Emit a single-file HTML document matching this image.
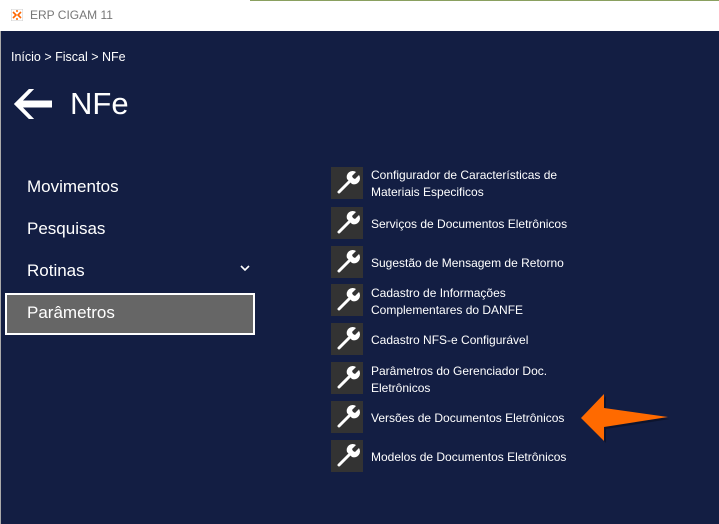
<!DOCTYPE html>
<html><head><style>
body{margin:0;width:719px;height:524px;overflow:hidden;background:#131e43;font-family:"Liberation Sans",sans-serif;position:relative}
.tb{position:absolute;left:0;top:0;width:719px;height:31px;background:#fff}
.tb span{position:absolute;left:30px;top:8px;font-size:12px;color:#777}
.lb{position:absolute;left:0;top:31px;width:1px;height:493px;background:#aaa}
.bc{position:absolute;left:11px;top:50px;color:#fff;font-size:12.5px}
.h{position:absolute;left:70px;top:86px;color:#fff;font-size:31px}
.m{position:absolute;left:27px;color:#fff;font-size:17px}
.sel{position:absolute;left:5px;top:293px;width:246px;height:38px;border:2px solid #fff;background:#666}
.it{position:absolute;left:331px;height:32px;width:330px}
.ic{position:absolute;left:0;top:0;width:32px;height:32px;background:#333}
.tx{position:absolute;left:40px;color:#fff;font-size:12px;line-height:17px}
</style></head><body>
<div class="tb"><svg style="position:absolute;left:11px;top:9px" width="12" height="12"><rect width="12" height="12" fill="#fff" stroke="#ccc"/><path d="M2 3l3 3-3 3M10 3l-3 3 3 3M5 2h2M5 10h2" stroke="#f60" stroke-width="1.6" fill="none"/></svg><span>ERP CIGAM 11</span></div>
<div style="position:absolute;left:250px;top:0;width:469px;height:1px;background:#8aa060"></div>
<div class="lb"></div>
<div class="bc">Início &gt; Fiscal &gt; NFe</div>
<svg style="position:absolute;left:12px;top:87px" width="40" height="34"><path d="M2 17L17 2l5 0-11 11.5h39v7H11L22 32h-5z" fill="#fff"/><path d="M2 17L17 2h5L10 14h40v6H10l12 12h-5z" fill="#fff"/></svg>
<div class="h">NFe</div>
<div class="m" style="top:177px">Movimentos</div>
<div class="m" style="top:219px">Pesquisas</div>
<div class="m" style="top:261px">Rotinas</div>
<svg style="position:absolute;left:240px;top:265px" width="10" height="8"><path d="M1 1l4 4 4-4" stroke="#fff" stroke-width="1.6" fill="none"/></svg>
<div class="sel"></div>
<div class="m" style="top:303px">Parâmetros</div>

<svg width="0" height="0" style="position:absolute"><defs><g id="w"><path d="M8 25L18 15" stroke="#fff" stroke-width="3" stroke-linecap="round"/><path d="M16 12a6 6 0 0 1 9-7l-4 4 1 2 2 1 4-4a6 6 0 0 1-7 9z" fill="#fff"/></g></defs></svg>

<div class="it" style="top:167px"><div class="ic"><svg width="32" height="32"><use href="#w"/></svg></div><div class="tx" style="top:0px">Configurador de Características de<br>Materiais Especificos</div></div>
<div class="it" style="top:207px"><div class="ic"><svg width="32" height="32"><use href="#w"/></svg></div><div class="tx" style="top:9px">Serviços de Documentos Eletrônicos</div></div>
<div class="it" style="top:246px"><div class="ic"><svg width="32" height="32"><use href="#w"/></svg></div><div class="tx" style="top:9px">Sugestão de Mensagem de Retorno</div></div>
<div class="it" style="top:284px"><div class="ic"><svg width="32" height="32"><use href="#w"/></svg></div><div class="tx" style="top:1px">Cadastro de Informações<br>Complementares do DANFE</div></div>
<div class="it" style="top:323px"><div class="ic"><svg width="32" height="32"><use href="#w"/></svg></div><div class="tx" style="top:9px">Cadastro NFS-e Configurável</div></div>
<div class="it" style="top:362px"><div class="ic"><svg width="32" height="32"><use href="#w"/></svg></div><div class="tx" style="top:1px">Parâmetros do Gerenciador Doc.<br>Eletrônicos</div></div>
<div class="it" style="top:401px"><div class="ic"><svg width="32" height="32"><use href="#w"/></svg></div><div class="tx" style="top:9px">Versões de Documentos Eletrônicos</div></div>
<div class="it" style="top:440px"><div class="ic"><svg width="32" height="32"><use href="#w"/></svg></div><div class="tx" style="top:9px">Modelos de Documentos Eletrônicos</div></div>

<svg style="position:absolute;left:575px;top:390px" width="100" height="60"><path d="M6 28L29 4v14l64 9-64 10v14z" fill="#000" opacity=".3" transform="translate(2,2)"/><path d="M6 28L29 4v14l64 9-64 10v14z" fill="#ff6a00"/></svg>
</body></html>
